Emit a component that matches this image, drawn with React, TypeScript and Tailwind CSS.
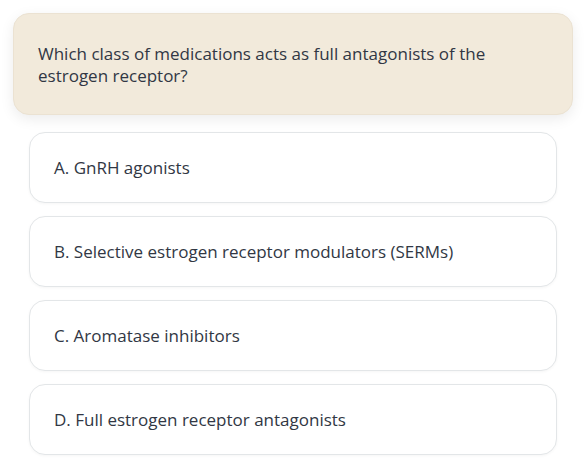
import React from "react";

const options = [
  "A. GnRH agonists",
  "B. Selective estrogen receptor modulators (SERMs)",
  "C. Aromatase inhibitors",
  "D. Full estrogen receptor antagonists",
];

export default function App() {
  return (
    <div
      className="min-h-screen bg-white px-[13px] pt-[13px] text-[#313744]"
      style={{ fontFamily: "'Open Sans', 'Noto Sans', sans-serif" }}
    >
      {/* Question */}
      <div className="flex h-[102px] items-center rounded-2xl border border-[#ebe2d2] bg-[#f2eadb] px-6 pt-[2px] shadow-[0_4px_14px_rgba(0,0,0,0.08)]">
        <p className="text-[17px] leading-[22px]">
          Which class of medications acts as full antagonists of the estrogen receptor?
        </p>
      </div>

      {/* Options */}
      <div className="mx-4 mt-[17px] flex flex-col gap-[13px]">
        {options.map((opt) => (
          <button
            key={opt}
            className="flex h-[71px] items-center rounded-2xl border border-[#e3e6e8] bg-white px-6 text-left text-[17px] shadow-[0_1px_3px_rgba(0,0,0,0.04)]"
          >
            {opt}
          </button>
        ))}
      </div>
    </div>
  );
}
